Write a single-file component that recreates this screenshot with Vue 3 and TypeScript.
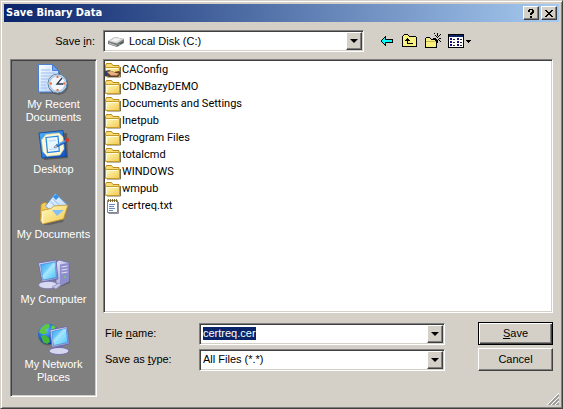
<script setup lang="ts">
import { onMounted, ref } from 'vue'

type Kind = 'shared' | 'folder' | 'text'
interface Entry {
  name: string
  kind: Kind
}
interface Place {
  id: string
  lines: string[]
}

const places: Place[] = [
  { id: 'recent', lines: ['My Recent', 'Documents'] },
  { id: 'desktop', lines: ['Desktop'] },
  { id: 'documents', lines: ['My Documents'] },
  { id: 'computer', lines: ['My Computer'] },
  { id: 'network', lines: ['My Network', 'Places'] },
]

const entries: Entry[] = [
  { name: 'CAConfig', kind: 'shared' },
  { name: 'CDNBazyDEMO', kind: 'folder' },
  { name: 'Documents and Settings', kind: 'folder' },
  { name: 'Inetpub', kind: 'folder' },
  { name: 'Program Files', kind: 'folder' },
  { name: 'totalcmd', kind: 'folder' },
  { name: 'WINDOWS', kind: 'folder' },
  { name: 'wmpub', kind: 'folder' },
  { name: 'certreq.txt', kind: 'text' },
]

const fileName = ref('certreq.cer')
const location = ref('Local Disk (C:)')
const fileType = ref('All Files (*.*)')
const nameBox = ref<HTMLInputElement | null>(null)

onMounted(() => {
  nameBox.value?.focus()
  nameBox.value?.select()
})
</script>

<template>
  <form class="window" @submit.prevent>
    <svg class="defs" width="0" height="0" aria-hidden="true">
      <defs>
        <linearGradient id="gFolder" x1="0" y1="0" x2="1" y2="1">
          <stop offset="0" stop-color="#fffbc0" />
          <stop offset="1" stop-color="#f3c94e" />
        </linearGradient>
        <linearGradient id="gScreen" x1="0" y1="0" x2="1" y2="1">
          <stop offset="0" stop-color="#3aa4f4" />
          <stop offset="0.6" stop-color="#8ce0fc" />
          <stop offset="1" stop-color="#4ab8f6" />
        </linearGradient>
        <linearGradient id="gCase" x1="0" y1="0" x2="1" y2="1">
          <stop offset="0" stop-color="#e8e8fa" />
          <stop offset="1" stop-color="#8c8cc8" />
        </linearGradient>
        <linearGradient id="gPage" x1="0" y1="0" x2="1" y2="1">
          <stop offset="0" stop-color="#ffffff" />
          <stop offset="1" stop-color="#a8ccf8" />
        </linearGradient>
        <linearGradient id="gPlate" x1="0" y1="0" x2="1" y2="1">
          <stop offset="0" stop-color="#4fb4fa" />
          <stop offset="1" stop-color="#0b4fc4" />
        </linearGradient>
        <radialGradient id="gGlobe" cx="0.35" cy="0.3" r="0.8">
          <stop offset="0" stop-color="#6cc4ff" />
          <stop offset="0.5" stop-color="#1a6ce0" />
          <stop offset="1" stop-color="#08308c" />
        </radialGradient>
      </defs>
    </svg>

    <header class="title">
      <h1>Save Binary Data</h1>
      <button type="button" class="cap" aria-label="Help">
        <svg width="8" height="9" viewBox="0 0 8 9" shape-rendering="crispEdges">
          <path d="M1 1h1v-1h4v1h1v3h-1v1h-1v1h-2v-2h1v-1h1v-2h-2v2h-2zM3 7h2v2h-2z" />
        </svg>
      </button>
      <button type="button" class="cap" aria-label="Close">
        <svg width="8" height="7" viewBox="0 0 8 7" shape-rendering="crispEdges">
          <path d="M0 0h2v1h1v1h2v-1h1v-1h2v1h-1v1h-1v1h-1v1h1v1h1v1h1v1h-2v-1h-1v-1h-2v1h-1v1h-2v-1h1v-1h1v-1h1v-1h-1v-1h-1v-1h-1z" />
        </svg>
      </button>
    </header>

    <div class="where">
      <label for="look">Save <u>i</u>n:</label>
      <div class="combo">
        <svg class="disk" width="16" height="16" viewBox="0 0 16 16">
          <path d="M0 8l7-4 9 2v4l-7 4-9-3z" fill="#77777b" />
          <path d="M0 8l7-4 9 2-7 4.500z" fill="#d6d6d8" />
          <path d="M3 7.700l4.500-2.700 5 1.200-4 2.600z" fill="#f4f4f4" />
          <path d="M1 9.500l7.500 2.700v1L1 10.700z" fill="#bcbcc0" />
          <path d="M10 11.500l5-2.800v1l-5 2.900z" fill="#4c4c50" />
          <path d="M10.500 11h2v1h-2z" fill="#5cc05c" />
        </svg>
        <select id="look" v-model="location">
          <option>Local Disk (C:)</option>
        </select>
        <span class="drop" />
      </div>
      <div class="tools">
        <button type="button" aria-label="Back">
          <svg width="16" height="16" viewBox="0 0 16 16" shape-rendering="crispEdges">
            <path d="M7 3v3h7v4h-7v3h-1v-1h-1v-1h-1v-1h-1v-1h-1v-2h1v-1h1v-1h1v-1h1v-1z" fill="#000" />
            <path d="M6 5v2h7v2h-7v2h-1v-1h-1v-1h-1v-2h1v-1h1v-1z" fill="#0ff" />
          </svg>
        </button>
        <button type="button" aria-label="Up one level">
          <svg width="16" height="16" viewBox="0 0 16 16" shape-rendering="crispEdges">
            <path d="M2 1h4v1h1v1h7v1h1v10h-15v-11h1v-1h1z" fill="#000" />
            <path d="M2 2h4v1h1v1h7v9h-13v-10h1z" fill="#f8f080" />
            <path d="M5 5h1v1h1v1h1v1h-2v2h5v1h-6v-3h-2v-1h1v-1h1z" fill="#000" />
          </svg>
        </button>
        <button type="button" aria-label="Create new folder">
          <svg width="16" height="16" viewBox="0 0 16 16" shape-rendering="crispEdges">
            <path d="M1 4h4v1h1v1h6v9h-12v-10h1z" fill="#000" />
            <path d="M1 5h4v1h1v1h5v1h-10zM1 8h10v6h-10z" fill="#f8f080" />
            <path d="M1 8h10v1h-10z" fill="#c0b850" />
            <path d="M9 0h1v1h-1zM12 0h1v3h-1zM15 1h1v1h-1zM10 2h1v1h-1zM14 2h1v1h-1zM11 3h1v1h-1zM13 3h1v1h-1zM8 5h3v1h-3zM14 5h2v1h-2zM12 4h1v1h-1zM11 6h1v1h-1zM13 6h1v1h-1zM12 7h1v3h-1zM10 7h1v1h-1zM14 7h1v1h-1zM15 8h1v1h-1z" fill="#000" />
          </svg>
        </button>
        <button type="button" class="views" aria-label="View menu">
          <svg width="24" height="16" viewBox="0 0 24 16" shape-rendering="crispEdges">
            <path d="M0 1h16v14h-16z" fill="#000" />
            <path d="M1 2h14v2h-14z" fill="#0a246a" />
            <path d="M1 4h14v10h-14z" fill="#fff" />
            <path d="M2 5h2v2h-2zM2 8h2v2h-2zM2 11h2v2h-2zM9 5h2v2h-2zM9 8h2v2h-2zM9 11h2v2h-2z" fill="#10107c" />
            <path d="M5 6h2v1h-2zM5 9h2v1h-2zM5 12h2v1h-2zM12 6h2v1h-2zM12 9h2v1h-2zM12 12h2v1h-2z" fill="#222" />
            <path d="M18 7h5v1h-1v1h-1v1h-1v-1h-1v-1h-1z" fill="#000" />
          </svg>
        </button>
      </div>
    </div>

    <div class="body">
      <nav class="places">
        <button v-for="p in places" :key="p.id" type="button">
          <svg width="32" height="32" viewBox="0 0 32 32" aria-hidden="true">
            <g v-if="p.id === 'recent'">
              <path d="M2 3h13l7 6v22H2z" fill="#555" opacity="0.5" />
              <path d="M0.500 1.500h14l6 6v21.500h-20z" fill="url(#gPage)" stroke="#4b7fd6" />
              <path d="M14.500 1.500v6h6z" fill="#6fa4ee" stroke="#3b6fca" stroke-width="0.800" />
              <path d="M3 7h9M3 10h14M3 13h11M3 16h8M3 19h6M3 22h5M3 25h6" stroke="#9cbcf0" />
              <circle cx="20.500" cy="22" r="10" fill="#444" opacity="0.500" />
              <circle cx="19.500" cy="20.500" r="9.500" fill="#f2f6fc" stroke="#5f7f9c" stroke-width="1" />
              <circle cx="19.500" cy="20.500" r="8" fill="none" stroke="#a9c6e4" stroke-width="1.500" />
              <path d="M19.500 13v2M19.500 26v2M12 20.500h2M25 20.500h2" stroke="#ee6a28" stroke-width="1.800" />
              <path d="M24 15l-5 6h6" fill="none" stroke="#26384c" stroke-width="1.300" />
            </g>
            <g v-else-if="p.id === 'desktop'">
              <path d="M3 6l26-1 1 25-24 2z" fill="#333" opacity="0.500" />
              <path d="M1 5l24-2.500 3.500 26L4 30z" fill="url(#gPlate)" stroke="#0b419c" stroke-width="0.800" />
              <path d="M8 6.500l13-1.500 4 4 1 12-4 6-13 1.200-4-4.500L3.500 12z" fill="#fdf8d8" stroke="#d8cc90" stroke-width="0.600" />
              <path d="M8 9.500l12-1.300 1.300 15L9.500 24.500z" fill="#e9f5ff" stroke="#2486e4" stroke-width="1.200" />
              <path d="M11 13l7-.8M11.500 21.500l7-.8" stroke="#b4d8f8" />
              <path d="M16 19.500l2-2.500 10-5 1 2-10 5z" fill="#2f78d4" stroke="#174480" stroke-width="0.600" />
              <path d="M16 19.500l2-2.500 1 2z" fill="#f4cf94" />
              <path d="M19.500 16.500l8-4" stroke="#8cc8ff" stroke-width="0.800" />
              <circle cx="29.300" cy="12" r="1.900" fill="#d2372a" />
            </g>
            <g v-else-if="p.id === 'documents'">
              <path d="M4 14l25 2-4 13-18 4-4-4z" fill="#444" opacity="0.500" />
              <path d="M3 11.500l3-2 4 1 2 3 14 1v11L6 30l-3.500-4z" fill="#f3cb55" stroke="#bf8d24" stroke-width="0.800" />
              <path d="M17.500 0.500L29 11.500 19 24 7.500 13z" fill="url(#gPage)" stroke="#5296e4" stroke-width="0.900" />
              <path d="M15 6l8 8M12.500 8.500l8 8" stroke="#a4d0f8" stroke-width="1.500" />
              <path d="M15 4l3-3 3 3-3 3z" fill="#3492ea" />
              <path d="M4 17.500l9-2 3-2.500 14-1-4.500 14L5 31 2.500 28z" fill="url(#gFolder)" stroke="#c59428" stroke-width="0.800" />
              <path d="M14 17h12l-7 6z" fill="#86c0f4" />
              <path d="M5 30.500l-1-12.500" stroke="#fffce0" />
            </g>
            <g v-else-if="p.id === 'computer'">
              <path d="M20 5l10 1 2 19-10 4z" fill="#444" opacity="0.450" />
              <path d="M18 4.500l3-2.500 10 2.500v19L22 28l-4-3z" fill="url(#gCase)" stroke="#6868a8" stroke-width="0.800" />
              <path d="M22 6.500v21L31 23V5z" fill="#8e8ecc" />
              <path d="M23.500 9l6-1M23.500 12l6-1M23.500 15l6-1" stroke="#e0e0f8" stroke-width="1.200" />
              <circle cx="27" cy="19" r="1" fill="#65d265" />
              <path d="M7 22l7-1 1 5H8z" fill="#7676b4" />
              <ellipse cx="10" cy="27" rx="9.500" ry="3.800" fill="#d8d8f0" stroke="#6a6aac" stroke-width="0.700" />
              <path d="M14 29l7-4 2 2-5 4z" fill="#c4c4e4" stroke="#7474b0" stroke-width="0.500" />
              <path d="M0.500 5l17.500-3 2 19L4 24z" fill="url(#gCase)" stroke="#6464a8" stroke-width="0.800" />
              <path d="M2.500 6.500L17 4l1.500 15.500L5 22z" fill="url(#gScreen)" stroke="#2874cc" stroke-width="0.500" />
              <path d="M4 18L15 5l2-.3.500 3-12 13z" fill="#c3f1ff" opacity="0.550" />
            </g>
            <g v-else>
              <circle cx="10.500" cy="12" r="10.500" fill="#444" opacity="0.500" />
              <circle cx="10.500" cy="11" r="10.300" fill="url(#gGlobe)" />
              <path d="M3 5l5-4 4 .5-1 3-3 2 1 3-3 2-3-1-2-1z" fill="#5ec93e" />
              <path d="M3 13l4-1 4 3 1 4-3 2-4-2z" fill="#45b437" />
              <path d="M14 2l4 2-2 3-3-1z" fill="#65cf45" />
              <path d="M17 23l8-1 1 5h-8z" fill="#7070ae" />
              <ellipse cx="21" cy="28" rx="10" ry="3.500" fill="#d6d6ef" stroke="#6464a4" stroke-width="0.800" />
              <path d="M12 7l17-3.500L31.500 21 14 24.500z" fill="url(#gCase)" stroke="#6464a8" stroke-width="0.800" />
              <path d="M13.800 8.500L28 5.500 29.800 19.500 15.500 22.500z" fill="url(#gScreen)" stroke="#2874cc" stroke-width="0.500" />
              <path d="M15 17L25 6.200l3-.7v3L16 21z" fill="#c3f1ff" opacity="0.550" />
            </g>
          </svg>
          <span v-for="line in p.lines" :key="line">{{ line }}</span>
        </button>
      </nav>

      <main>
        <ul class="files">
          <li v-for="e in entries" :key="e.name">
            <svg width="16" height="16" viewBox="0 0 16 16" aria-hidden="true">
              <g v-if="e.kind === 'text'">
                <path d="M2.500 2.500h10v12h-10z" fill="#fff" stroke="#7d8798" />
                <path d="M13.500 4v11.500h-10" fill="none" stroke="#77777a" stroke-width="0.800" />
                <path d="M3.500 1v3M5.500 1v3M7.500 1v3M9.500 1v3M11.500 1v3" stroke="#806c38" />
                <path d="M4 6.500h6M4 8.500h5M4 10.500h6M4 12.500h4" stroke="#668ac6" />
              </g>
              <g v-else>
                <path d="M2 15h13.500V5" fill="none" stroke="#77704e" />
                <path d="M0.500 3.500l1-2h5l1.500 2h6v10h-13.500z" fill="#f8dc72" stroke="#b98a1c" />
                <path d="M0.500 5.500h14v9h-14z" fill="url(#gFolder)" stroke="#c79a2c" />
                <path d="M1.500 13V6.500H13" fill="none" stroke="#fffde0" />
                <g v-if="e.kind === 'shared'">
                  <path d="M0 9l4-1 5 2 5-1 2 2-3 4H4l-4-2z" fill="#5a4028" />
                  <path d="M2 10l4-1 5 2 3 .5-2 2H6z" fill="#e8b07c" />
                  <path d="M0 9h2v5H0z" fill="#283c78" />
                </g>
              </g>
            </svg>
            <span>{{ e.name }}</span>
          </li>
        </ul>

        <div class="fields">
          <label for="fname">File <u>n</u>ame:</label>
          <div class="combo">
            <input id="fname" ref="nameBox" v-model="fileName" type="text" spellcheck="false" autocomplete="off" />
            <span class="drop" />
          </div>
          <button type="submit" class="push default"><span><u>S</u>ave</span></button>

          <label for="ftype">Save as <u>t</u>ype:</label>
          <div class="combo">
            <select id="ftype" v-model="fileType">
              <option>All Files (*.*)</option>
            </select>
            <span class="drop" />
          </div>
          <button type="button" class="push"><span>Cancel</span></button>
        </div>
      </main>
    </div>

    <svg class="grip" width="12" height="12" viewBox="0 0 12 12" aria-hidden="true">
      <path d="M0 12L12 0M4 12L12 4M8 12L12 8" stroke="#fff" />
      <path d="M1.500 12L12 1.500M2.500 12L12 2.500M5.500 12L12 5.500M6.500 12L12 6.500M9.500 12L12 9.500M10.500 12L12 10.500" stroke="#808080" />
    </svg>
  </form>
</template>

<style>
body {
  background: #d4d0c8;
}
</style>

<style scoped>
* {
  box-sizing: border-box;
}

.window {
  position: relative;
  display: flex;
  flex-direction: column;
  min-height: 100vh;
  padding: 3px;
  background: #d4d0c8;
  border: 1px solid;
  border-color: #d4d0c8 #404040 #404040 #d4d0c8;
  box-shadow: inset 1px 1px #fff, inset -1px -1px #808080;
  font: 11px/13px "Liberation Sans", Arial, sans-serif;
  color: #000;
}

.defs {
  position: absolute;
}

button,
input,
select {
  margin: 0;
  padding: 0;
  border: 0;
  border-radius: 0;
  outline: none;
  background: none;
  font: inherit;
  color: inherit;
  appearance: none;
}

u {
  text-underline-offset: 1px;
}

.title {
  display: flex;
  align-items: center;
  height: 18px;
  padding: 0 2px;
  background: linear-gradient(90deg, #0a246a, #a6caf0);
}

h1 {
  flex: 1;
  margin: 0;
  font: bold 11px/18px "DejaVu Sans Condensed", "DejaVu Sans", sans-serif;
  color: #fff;
}

.cap,
.drop,
.push {
  background: #d4d0c8;
  border: 1px solid;
  border-color: #fff #404040 #404040 #fff;
  box-shadow: inset -1px -1px #808080;
}

.cap {
  display: flex;
  align-items: center;
  justify-content: center;
  width: 16px;
  height: 14px;
}

.cap + .cap {
  margin-left: 2px;
}

.where {
  display: flex;
  align-items: center;
  padding: 8px 6px 7px;
}

.where label {
  width: 93px;
  padding-right: 8px;
  text-align: right;
}

.where .combo {
  flex: 1;
}

.combo {
  display: flex;
  align-items: center;
  height: 22px;
  padding: 1px;
  background: #fff;
  border: 1px solid;
  border-color: #808080 #fff #fff #808080;
  box-shadow: inset 1px 1px #404040, inset -1px -1px #d4d0c8;
}

.combo select,
.combo input {
  flex: 1;
  min-width: 0;
  height: 13px;
  padding-left: 2px;
}

.combo input {
  margin-left: 2px;
  padding-left: 0;
}

.combo input::selection {
  background: #0a246a;
  color: #fff;
}

.disk {
  margin: 0 3px;
}

.drop {
  display: flex;
  align-items: center;
  justify-content: center;
  align-self: stretch;
  width: 16px;
}

.drop::before {
  content: "";
  border: 4px solid transparent;
  border-top-color: #000;
  border-bottom: 0;
}

.tools {
  display: flex;
  width: 189px;
  padding-left: 12px;
}

.tools button {
  width: 23px;
  height: 22px;
  padding: 3px 0 3px 3px;
}

.tools .views {
  width: 29px;
}

.tools svg,
.places svg {
  display: block;
}

.body {
  flex: 1;
  display: grid;
  grid-template-columns: 87px 1fr;
  gap: 6px;
  padding: 0 6px 8px;
}

.places {
  display: grid;
  grid-auto-rows: 65px;
  padding: 3px 1px 1px;
  background: #808080;
  border: 1px solid;
  border-color: #808080 #fff #fff #808080;
  box-shadow: inset 1px 1px #404040, inset -1px -1px #d4d0c8;
}

.places button {
  display: flex;
  flex-direction: column;
  align-items: center;
  color: #fff;
}

.places svg {
  margin-bottom: 3px;
}

main {
  display: flex;
  flex-direction: column;
}

.files {
  flex: 1;
  margin: 0;
  padding: 1px;
  list-style: none;
  background: #fff;
  border: 1px solid;
  border-color: #808080 #fff #fff #808080;
  box-shadow: inset 1px 1px #404040, inset -1px -1px #d4d0c8;
  font-family: Roboto, "DejaVu Sans Condensed", sans-serif;
}

.files li {
  display: flex;
  align-items: center;
  gap: 1px;
  height: 17px;
}

.fields {
  display: grid;
  grid-template-columns: 96px 1fr 75px;
  row-gap: 3px;
  align-items: center;
  padding: 9px 0 26px;
}

.fields label {
  padding-left: 2px;
}

.fields .combo {
  margin-right: 33px;
}

.push {
  height: 23px;
}

.default {
  border-color: #000;
  box-shadow: inset 1px 1px #fff, inset -1px -1px #404040, inset -2px -2px #808080;
}

.grip {
  position: absolute;
  right: 3px;
  bottom: 3px;
}
</style>
